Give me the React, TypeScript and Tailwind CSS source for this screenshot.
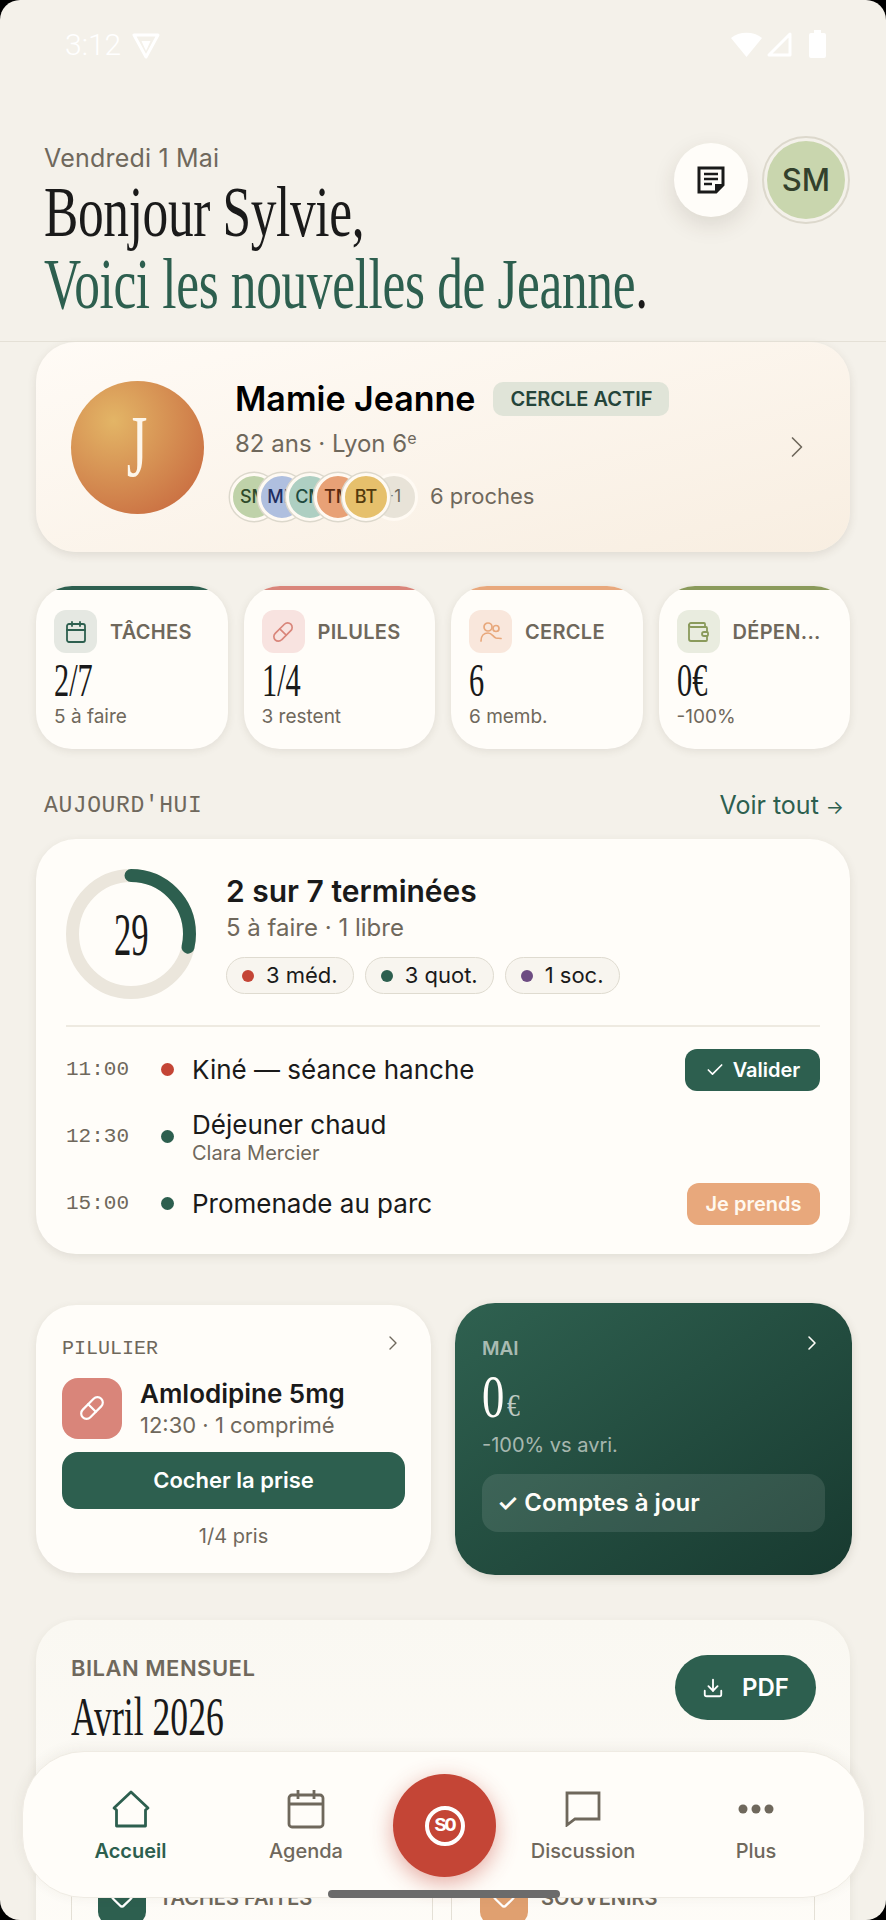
import React from 'react'
import { Calendar, Check, ChevronRight, Download, Heart, Pill, Wallet } from 'lucide-react'

const SANS = "font-['Inter','Noto_Sans',sans-serif]"

// Condensed display serif used for headings and big numbers
function Display({ children, className = '' }: { children: React.ReactNode; className?: string }) {
  return (
    <span className={`inline-block origin-left whitespace-nowrap font-['Liberation_Serif',serif] ${className}`}>
      {children}
    </span>
  )
}

function StatusBar() {
  return (
    <div className="flex h-[90px] items-start justify-between pl-[65px] pr-[60px] pt-[27px] text-white">
      <div className="flex items-center gap-[10px]">
        <span className="font-['Roboto',sans-serif] text-[30px] font-light leading-[36px]">3:12</span>
        <svg width="30" height="27" viewBox="0 0 30 27" fill="none">
          <path d="M3 3h24L15 25z" stroke="white" strokeWidth="3" strokeLinejoin="round" />
          <path d="M10.5 9h9L15 19z" fill="white" />
        </svg>
      </div>
      <div className="flex items-center gap-[4px] pt-[3px]">
        <svg width="31" height="26" viewBox="0 0 31 26">
          <path d="M0 7C8 0 23 0 31 7L15.5 26z" fill="white" />
        </svg>
        <svg width="27" height="26" viewBox="0 0 27 26" fill="none">
          <path d="M24 3v21H3z" stroke="white" strokeWidth="3" strokeLinejoin="round" />
        </svg>
        <svg className="ml-[12px]" width="17" height="28" viewBox="0 0 17 28">
          <path d="M5 0h7v3h3a2 2 0 0 1 2 2v21a2 2 0 0 1-2 2H2a2 2 0 0 1-2-2V5a2 2 0 0 1 2-2h3z" fill="white" />
        </svg>
      </div>
    </div>
  )
}

function Header() {
  return (
    <div className="relative h-[252px] border-b border-[#e4e0d6] pl-[44px] pt-[54px]">
      <div className={`${SANS} text-[25px] leading-[28px] tracking-[0.2px] text-[#6f685c]`}>Vendredi 1 Mai</div>
      <div className="mt-[1px] text-[72px] leading-[70px] text-[#1a1a1a]">
        <Display className="scale-x-[0.714] tracking-[-0.5px]">Bonjour Sylvie,</Display>
      </div>
      <div className="text-[72px] leading-[66px] text-[#2d5f4f]">
        <Display className="scale-x-[0.714] tracking-[-0.5px]">
          Voici les nouvelles de Jeanne<span className="text-[#1a1a1a]">.</span>
        </Display>
      </div>
      <div className="absolute right-[36px] top-[46px] flex items-center gap-[14px]">
        <button className="flex h-[74px] w-[74px] items-center justify-center rounded-full bg-[#fffdf9] shadow-[0_8px_22px_rgba(60,50,30,0.13)]">
          <svg width="28" height="28" viewBox="0 0 28 28" fill="none">
            <path d="M2 2h24v17l-7 7H2z" stroke="#1a1a1a" strokeWidth="3" />
            <path d="M7 8h14M7 13h14M7 18h8" stroke="#1a1a1a" strokeWidth="2.6" />
            <path d="M26 18h-8v8z" fill="#1a1a1a" />
          </svg>
        </button>
        <div className="rounded-full border-[2px] border-[#dcd8cc] p-[3px]">
          <div className={`${SANS} flex h-[78px] w-[78px] items-center justify-center rounded-full bg-[#c9d6ae] text-[31px] font-medium text-[#33412c]`}>
            SM
          </div>
        </div>
      </div>
    </div>
  )
}

const relatives = [
  { t: 'SM', c: 'bg-[#bfd2a9] text-[#2e4a2a]', z: 'z-[5]' },
  { t: 'MD', c: 'bg-[#afbfdf] text-[#1f2e60]', z: 'z-[6]' },
  { t: 'CM', c: 'bg-[#aecfc2] text-[#1f4a3e]', z: 'z-[7]' },
  { t: 'TM', c: 'bg-[#e8a176] text-[#5a2a10]', z: 'z-[8]' },
  { t: 'BT', c: 'bg-[#e6c06c] text-[#52390c]', z: 'z-[9]' },
]

function HeroCard() {
  return (
    <div className="mx-[36px] flex h-[210px] items-center rounded-[40px] bg-gradient-to-br from-[#fffbf6] to-[#f8eee1] pl-[35px] pr-[35px] shadow-[0_3px_10px_rgba(70,60,40,0.12)]">
      <div className="flex h-[133px] w-[133px] shrink-0 items-center justify-center rounded-full bg-[radial-gradient(circle_at_32%_30%,#e3b566,#c8693f_90%)]">
        <span className="scale-x-[0.6] font-['Liberation_Serif',serif] text-[88px] leading-none text-[#fdf6ea]">J</span>
      </div>
      <div className="ml-[31px] flex-1 pt-[5px]">
        <div className="flex items-center gap-[18px]">
          <span className={`${SANS} text-[34px] font-semibold leading-[40px] text-black`}>Mamie Jeanne</span>
          <span className={`${SANS} flex h-[34px] w-[176px] items-center justify-center rounded-[10px] bg-[#e0e4d8] text-[20px] font-semibold text-[#24443a]`}>
            CERCLE ACTIF
          </span>
        </div>
        <div className={`${SANS} mt-[10px] text-[24px] leading-[30px] text-[#6f685c]`}>
          82 ans · Lyon 6<sup className="text-[16px]">e</sup>
        </div>
        <div className="ml-[-5px] mt-[14px] flex items-center">
          <div className="flex">
            {relatives.map((r, i) => (
              <div
                key={r.t}
                className={`${SANS} ${r.z} ${i > 0 ? 'ml-[-20px]' : ''} relative flex h-[48px] w-[48px] items-center justify-center overflow-hidden rounded-full border-[3px] border-[#fffaf3] text-[18px] font-medium shadow-[0_0_0_1.5px_#dcd8cc] ${r.c}`}
              >
                {r.t}
              </div>
            ))}
            <div className={`${SANS} ml-[-20px] flex h-[48px] w-[48px] items-center justify-center rounded-full border-[3px] border-[#fffaf3] bg-[#e8e3d8] pr-[4px] text-[17px] text-[#6f685c]`}>
              +1
            </div>
          </div>
          <span className={`${SANS} ml-[12px] text-[22px] text-[#6f685c]`}>6 proches</span>
        </div>
      </div>
      <ChevronRight size={36} strokeWidth={1.1} className="text-[#6f685c]" />
    </div>
  )
}

function UsersIcon() {
  return (
    <svg width="24" height="24" viewBox="0 0 24 24" fill="none" stroke="#e8a87c" strokeWidth="1.7" strokeLinecap="round">
      <circle cx="9" cy="7" r="4" />
      <circle cx="17" cy="8.5" r="3" />
      <path d="M2 21c0-5 3-8 7-8s5 4 8 5c2 .5 3 0 5 .5" />
    </svg>
  )
}

const stats = [
  { label: 'TÂCHES', value: '2/7', sub: '5 à faire', bar: 'bg-[#2d5f4f]', tile: 'bg-[#e5e8e2]', icon: <Calendar size={24} strokeWidth={1.8} className="text-[#2d5f4f]" /> },
  { label: 'PILULES', value: '1/4', sub: '3 restent', bar: 'bg-[#d9857a]', tile: 'bg-[#f8e3e0]', icon: <Pill size={22} strokeWidth={1.8} className="text-[#d9857a]" /> },
  { label: 'CERCLE', value: '6', sub: '6 memb.', bar: 'bg-[#e8a87c]', tile: 'bg-[#f9e7dc]', icon: <UsersIcon /> },
  { label: 'DÉPEN...', value: '0€', sub: '-100%', bar: 'bg-[#8a9a5b]', tile: 'bg-[#e9ecdf]', icon: <Wallet size={24} strokeWidth={1.8} className="text-[#8a9a5b]" /> },
]

function StatCards() {
  return (
    <div className="mx-[36px] mt-[34px] grid grid-cols-4 gap-[16px]">
      {stats.map((s) => (
        <div key={s.label} className="h-[163px] overflow-hidden rounded-[36px] bg-[#fffdf9] shadow-[0_2px_8px_rgba(70,60,40,0.1)]">
          <div className={`h-[4px] ${s.bar}`} />
          <div className="px-[18px] pt-[20px]">
            <div className="flex items-center gap-[13px]">
              <div className={`flex h-[43px] w-[43px] items-center justify-center rounded-[12px] ${s.tile}`}>{s.icon}</div>
              <span className={`${SANS} whitespace-nowrap text-[20px] font-semibold tracking-[0.3px] text-[#6f685c]`}>{s.label}</span>
            </div>
            <div className="mt-[2px] h-[46px] text-[46px] leading-[46px] text-[#1a1a1a]">
              <Display className="scale-x-[0.66]">{s.value}</Display>
            </div>
            <div className={`${SANS} mt-[4px] text-[19px] leading-[24px] text-[#6f685c]`}>{s.sub}</div>
          </div>
        </div>
      ))}
    </div>
  )
}

function Chip({ dot, label }: { dot: string; label: string }) {
  return (
    <span className={`${SANS} flex h-[37px] items-center gap-[12px] rounded-full border border-[#dfdbd0] bg-[#f8f5ef] px-[15px] text-[22px] text-[#1a1a1a]`}>
      <span className={`h-[12px] w-[12px] rounded-full ${dot}`} />
      {label}
    </span>
  )
}

function AgendaRow({ time, dot, title, sub, action }: { time: string; dot: string; title: string; sub?: string; action?: React.ReactNode }) {
  return (
    <div className="flex h-[67px] items-center">
      <span className="w-[94px] font-['Liberation_Mono',monospace] text-[21px] text-[#6f685c]">{time}</span>
      <span className={`ml-[1px] h-[13px] w-[13px] rounded-full ${dot}`} />
      <div className="ml-[18px] flex-1">
        <div className={`${SANS} text-[26px] leading-[32px] text-[#1a1a1a]`}>{title}</div>
        {sub && <div className={`${SANS} text-[20px] leading-[24px] text-[#6f685c]`}>{sub}</div>}
      </div>
      {action}
    </div>
  )
}

function TodayCard() {
  return (
    <>
      <div className="mx-[44px] mt-[40px] flex h-[34px] items-center justify-between">
        <span className="font-['Liberation_Mono',monospace] text-[23px] tracking-[0.6px] text-[#6f685c]">AUJOURD'HUI</span>
        <span className={`${SANS} mr-[-2px] text-[25px] text-[#2d5f4f]`}>
          Voir tout <span className="text-[19px]">→</span>
        </span>
      </div>
      <div className="mx-[36px] mt-[16px] h-[415px] rounded-[40px] bg-[#fffdf9] px-[30px] pt-[30px] shadow-[0_3px_10px_rgba(70,60,40,0.1)]">
        <div className="flex items-start">
          <div className="relative h-[130px] w-[130px] shrink-0">
            <svg width="130" height="130" viewBox="0 0 130 130" fill="none">
              <circle cx="65" cy="65" r="58.5" stroke="#ebe6dc" strokeWidth="13" />
              <circle
                cx="65"
                cy="65"
                r="58.5"
                stroke="#2d5f4f"
                strokeWidth="13"
                strokeLinecap="round"
                strokeDasharray="105 368"
                transform="rotate(-90 65 65)"
              />
            </svg>
            <div className="absolute inset-0 flex items-center justify-center pl-[28px] text-[62px] leading-none text-[#1a1a1a]">
              <Display className="scale-x-[0.56]">29</Display>
            </div>
          </div>
          <div className="ml-[30px]">
            <div className={`${SANS} mt-[3px] text-[30px] font-semibold leading-[38px] text-[#1a1a1a]`}>2 sur 7 terminées</div>
            <div className={`${SANS} mt-[2px] text-[24px] leading-[32px] text-[#6f685c]`}>5 à faire · 1 libre</div>
            <div className="mt-[13px] flex gap-[11px]">
              <Chip dot="bg-[#c44536]" label="3 méd." />
              <Chip dot="bg-[#2d5f4f]" label="3 quot." />
              <Chip dot="bg-[#6d4c82]" label="1 soc." />
            </div>
          </div>
        </div>
        <div className="mt-[26px] h-[2px] bg-[#eeeae1]" />
        <div className="mt-[9px]">
          <AgendaRow
            time="11:00"
            dot="bg-[#c44536]"
            title="Kiné — séance hanche"
            action={
              <button className={`${SANS} flex h-[42px] w-[135px] items-center justify-center gap-[8px] rounded-[12px] bg-[#2d5f4f] text-[20px] font-semibold text-white`}>
                <Check size={20} strokeWidth={2} />
                Valider
              </button>
            }
          />
          <AgendaRow time="12:30" dot="bg-[#2d5f4f]" title="Déjeuner chaud" sub="Clara Mercier" />
          <AgendaRow
            time="15:00"
            dot="bg-[#2d5f4f]"
            title="Promenade au parc"
            action={
              <button className={`${SANS} h-[42px] w-[133px] rounded-[12px] bg-[#e8a87c] text-[20px] font-semibold text-[#fff8ef]`}>
                Je prends
              </button>
            }
          />
        </div>
      </div>
    </>
  )
}

function BottomCards() {
  return (
    <div className="ml-[36px] mt-[49px] grid w-[816px] grid-cols-[395px_397px] items-center gap-[24px]">
      <div className="h-[268px] rounded-[40px] bg-[#fffdf9] px-[26px] pt-[31px] shadow-[0_3px_10px_rgba(70,60,40,0.1)]">
        <div className="flex h-[26px] items-center justify-between">
          <span className="font-['Liberation_Mono',monospace] text-[20px] text-[#6f685c]">PILULIER</span>
          <ChevronRight size={24} strokeWidth={1.4} className="mb-[12px] text-[#6f685c]" />
        </div>
        <div className="mt-[15px] flex items-center gap-[18px]">
          <div className="flex h-[61px] w-[60px] items-center justify-center rounded-[16px] bg-[#d9857a]">
            <Pill size={26} strokeWidth={2} className="text-white" />
          </div>
          <div>
            <div className={`${SANS} text-[26px] font-semibold leading-[34px] text-[#1a1a1a]`}>Amlodipine 5mg</div>
            <div className={`${SANS} text-[22px] leading-[28px] text-[#6f685c]`}>12:30 · 1 comprimé</div>
          </div>
        </div>
        <button className={`${SANS} mt-[13px] h-[57px] w-full rounded-[16px] bg-[#2d5f4f] text-[22px] font-semibold text-white`}>
          Cocher la prise
        </button>
        <div className={`${SANS} mt-[13px] text-center text-[20px] leading-[28px] text-[#6f685c]`}>1/4 pris</div>
      </div>
      <div className="h-[272px] rounded-[40px] bg-gradient-to-br from-[#2f6150] to-[#183a30] px-[27px] pt-[33px] shadow-[0_3px_10px_rgba(70,60,40,0.15)]">
        <div className="flex h-[26px] items-center justify-between">
          <span className={`${SANS} text-[19px] font-semibold text-[#fffdf9]/60`}>MAI</span>
          <ChevronRight size={24} strokeWidth={1.6} className="mb-[12px] mr-[1px] text-[#fffdf9]" />
        </div>
        <div className="mt-[9px] flex h-[50px] items-end text-[#fffdf9]">
          <Display className="scale-x-[0.72] text-[62px] leading-[50px]">0</Display>
          <Display className="ml-[-6px] scale-x-[0.8] text-[32px] leading-[32px] opacity-70">€</Display>
        </div>
        <div className={`${SANS} mt-[11px] text-[20px] leading-[26px] text-[#fffdf9]/60`}>-100% vs avri.</div>
        <div className={`${SANS} mt-[16px] flex h-[58px] items-center rounded-[16px] bg-white/10 px-[15px] text-[24px] font-semibold text-[#fffdf9]`}>
          ✓ Comptes à jour
        </div>
      </div>
    </div>
  )
}

function MonthlyCard() {
  return (
    <div className="mx-[36px] mt-[45px] h-[400px] rounded-[40px] bg-gradient-to-b from-[#faf8f2] to-[#fffdf9] pl-[35px] pr-[34px] pt-[34px] shadow-[0_3px_10px_rgba(70,60,40,0.08)]">
      <div className="flex items-start justify-between">
        <div>
          <div className={`${SANS} text-[22px] font-semibold leading-[28px] tracking-[0.5px] text-[#6f685c]`}>BILAN MENSUEL</div>
          <div className="mt-[7px] text-[54px] leading-[50px] text-[#1a1a1a]">
            <Display className="scale-x-[0.66]">Avril 2026</Display>
          </div>
        </div>
        <button className={`${SANS} mt-[1px] flex h-[65px] w-[141px] items-center justify-center gap-[18px] rounded-full bg-[#2d5f4f] text-[24px] font-semibold text-white`}>
          <Download size={22} strokeWidth={2} />
          PDF
        </button>
      </div>
      <div className="mt-[105px] grid grid-cols-[362px_364px] gap-[18px]">
        <div className="flex h-[120px] items-start gap-[13px] rounded-[18px] border border-[#e4e0d6] px-[26px] pt-[20px]">
          <div className="flex h-[56px] w-[48px] items-center justify-center rounded-[12px] bg-[#2d5f4f]">
            <Heart size={28} strokeWidth={2} className="text-white" />
          </div>
          <span className={`${SANS} mt-[15px] text-[20px] font-semibold text-[#6f685c]`}>TÂCHES FAITES</span>
        </div>
        <div className="flex h-[120px] items-start gap-[13px] rounded-[18px] border border-[#e4e0d6] px-[28px] pt-[20px]">
          <div className="flex h-[56px] w-[48px] items-center justify-center rounded-[12px] bg-[#e0a070]">
            <Heart size={28} strokeWidth={2} className="text-white" />
          </div>
          <span className={`${SANS} mt-[15px] text-[20px] font-semibold text-[#6f685c]`}>SOUVENIRS</span>
        </div>
      </div>
    </div>
  )
}

function NavItem({ label, icon, active, className = '' }: { label: string; icon: React.ReactNode; active?: boolean; className?: string }) {
  return (
    <div className={`flex flex-col items-center ${className}`}>
      <div className="flex h-[40px] items-center justify-center">{icon}</div>
      <span className={`${SANS} mt-[8px] whitespace-nowrap text-[20px] leading-[28px] ${active ? 'font-semibold text-[#2d5f4f]' : 'font-medium text-[#6f685c]'}`}>
        {label}
      </span>
    </div>
  )
}

function BottomNav() {
  return (
    <div className="absolute bottom-[22px] left-[22px] h-[147px] w-[843px] rounded-[62px] border border-[#efebe3] bg-[#fffdf9] shadow-[0_-2px_14px_rgba(70,60,40,0.07)]">
      <div className="flex h-full items-start pt-[37px]">
        <NavItem
          className="w-[215px]"
          active
          label="Accueil"
          icon={
            <svg width="38" height="38" viewBox="0 0 38 38" fill="none" stroke="#2d5f4f" strokeWidth="2.8" strokeLinejoin="round">
              <path d="M19 2 36 18l-2.500 2v16h-29V20L2 18z" />
            </svg>
          }
        />
        <NavItem
          className="w-[136px]"
          label="Agenda"
          icon={
            <svg width="38" height="40" viewBox="0 0 38 40" fill="none" stroke="#6f685c" strokeWidth="2.8" strokeLinejoin="round">
              <rect x="2" y="6" width="34" height="32" rx="3" />
              <path d="M2 15h34M11 1v9M27 1v9" />
            </svg>
          }
        />
        <div className="w-[137px]" />
        <NavItem
          className="w-[144px]"
          label="Discussion"
          icon={
            <svg width="36" height="36" viewBox="0 0 36 36" fill="none" stroke="#6f685c" strokeWidth="2.8" strokeLinejoin="miter">
              <path d="M2 2h32v26H10l-8 6z" />
            </svg>
          }
        />
        <NavItem
          className="w-[202px]"
          label="Plus"
          icon={
            <svg width="36" height="10" viewBox="0 0 36 10" fill="#6f685c">
              <circle cx="5" cy="5" r="4.500" />
              <circle cx="18" cy="5" r="4.500" />
              <circle cx="31" cy="5" r="4.500" />
            </svg>
          }
        />
      </div>
      <button className="absolute left-[370px] top-[22px] flex h-[103px] w-[103px] items-center justify-center rounded-full bg-[#c44536] shadow-[0_6px_22px_rgba(196,69,54,0.45)]">
        <span className="flex h-[40px] w-[40px] items-center justify-center rounded-full border-[4px] border-white font-['Liberation_Mono',monospace] text-[20px] font-bold tracking-[-2px] text-white">
          SO
        </span>
      </button>
      <div className="absolute bottom-[-1px] left-[305px] h-[8px] w-[232px] rounded-full bg-[#6b6b6b]" />
    </div>
  )
}

export default function App() {
  return (
    <div className="h-[1920px] w-[886px] overflow-hidden bg-black">
      <div className="relative h-full overflow-hidden rounded-[20px] bg-[#f4f1ea]">
        <StatusBar />
        <Header />
        <HeroCard />
        <StatCards />
        <TodayCard />
        <BottomCards />
        <MonthlyCard />
        <BottomNav />
      </div>
    </div>
  )
}
